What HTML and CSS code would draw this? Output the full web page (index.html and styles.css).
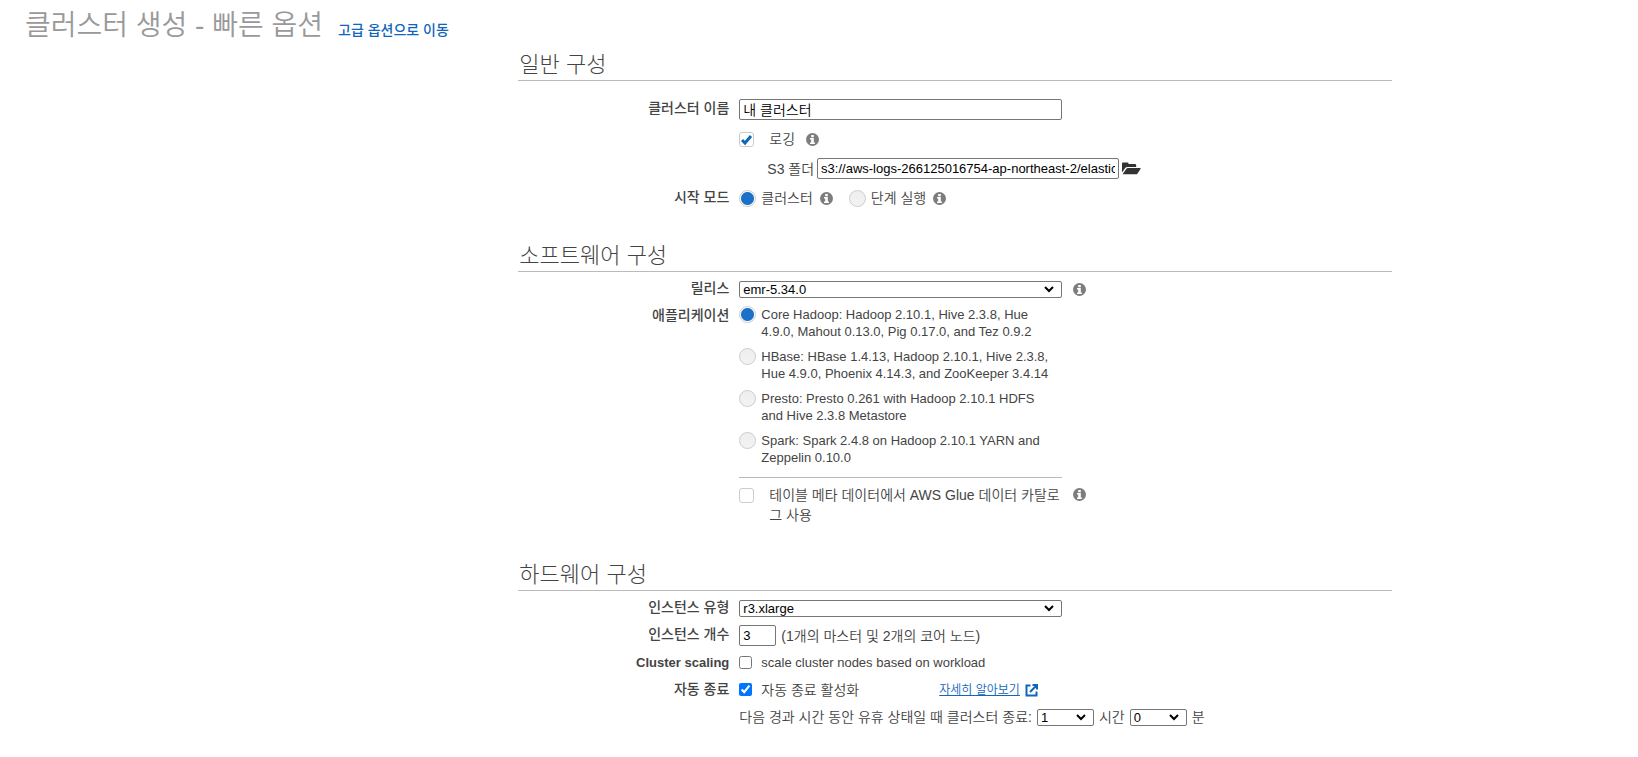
FILE: index.html
```html
<!DOCTYPE html>
<html lang="ko">

<head>
    <meta charset="utf-8">
    <title>클러스터 생성 - 빠른 옵션</title>
    <link rel="stylesheet" href="styles.css">
</head>

<body>
    <!-- shared icons -->
    <svg class="sprite" aria-hidden="true">
        <symbol id="info" viewBox="0 0 13 13">
            <circle cx="6.5" cy="6.5" r="6.5" fill="#7d7d7d" />
            <path d="M5.2 1.900h2.600v2.300H5.200zM4 5.100h3.800v4.300h1.100v1.600H4V9.400h1.200V6.600H4z" fill="#fff" />
        </symbol>
    </svg>

    <div class="header">
        <h1 class="title">클러스터 생성 - 빠른 옵션</h1>
        <a class="advanced_link" href="#">고급 옵션으로 이동</a>
    </div>

    <form class="content">
        <section class="general">
            <h2 class="heading">일반 구성</h2>
            <div class="row">
                <label class="name" for="cluster_name">클러스터 이름</label>
                <div class="field"><input class="text wide" id="cluster_name" type="text" value="내 클러스터"></div>
            </div>
            <div class="row">
                <div class="field right_col">
                    <input class="check" id="logging" type="checkbox" checked>
                    <label class="check_label" for="logging">로깅</label>
                    <svg class="info after_check"><use href="#info" /></svg>
                </div>
            </div>
            <div class="row">
                <div class="field right_col s3">
                    <label for="s3_folder">S3 폴더</label>
                    <input class="text s3_input" id="s3_folder" type="text" value="s3://aws-logs-266125016754-ap-northeast-2/elasticmapreduce/">
                    <button class="folder_btn" type="button" aria-label="폴더">
                        <svg width="19" height="13" viewBox="0 0 19 13">
                            <path d="M0 10.500V1.500Q0 .5 1 .5h4.500q1 0 1 1V2H13q1.200 0 1.200 1.200V5H5.500Q4 5 3.200 6z" fill="#333" />
                            <path d="M.8 12 4.200 7q.6-.9 1.800-.9h12.200q.9 0 .3.900l-3 4.400q-.6.9-1.700.9H1.200q-.7 0-.4-.3z" fill="#333" />
                        </svg>
                    </button>
                </div>
            </div>
            <div class="row">
                <span class="name">시작 모드</span>
                <div class="field">
                    <input class="radio" id="mode_cluster" type="radio" name="mode" checked>
                    <label class="radio_label" for="mode_cluster">클러스터</label>
                    <svg class="info after_radio"><use href="#info" /></svg>
                    <input class="radio second_radio" id="mode_step" type="radio" name="mode">
                    <label class="radio_label" for="mode_step">단계 실행</label>
                    <svg class="info after_radio"><use href="#info" /></svg>
                </div>
            </div>
        </section>

        <section class="software">
            <h2 class="heading">소프트웨어 구성</h2>
            <div class="row">
                <label class="name" for="release">릴리스</label>
                <div class="field">
                    <select class="select wide" id="release"><option>emr-5.34.0</option></select>
                    <svg class="info outside"><use href="#info" /></svg>
                </div>
            </div>
            <div class="row">
                <span class="name">애플리케이션</span>
                <div class="apps wide">
                    <div class="app">
                        <input class="radio" id="core_hadoop" type="radio" name="app" checked>
                        <label for="core_hadoop">Core Hadoop: Hadoop 2.10.1, Hive 2.3.8, Hue 4.9.0, Mahout 0.13.0, Pig 0.17.0, and Tez 0.9.2</label>
                    </div>
                    <div class="app">
                        <input class="radio" id="hbase" type="radio" name="app">
                        <label for="hbase">HBase: HBase 1.4.13, Hadoop 2.10.1, Hive 2.3.8, Hue 4.9.0, Phoenix 4.14.3, and ZooKeeper 3.4.14</label>
                    </div>
                    <div class="app">
                        <input class="radio" id="presto" type="radio" name="app">
                        <label for="presto">Presto: Presto 0.261 with Hadoop 2.10.1 HDFS and Hive 2.3.8 Metastore</label>
                    </div>
                    <div class="app">
                        <input class="radio" id="spark" type="radio" name="app">
                        <label for="spark">Spark: Spark 2.4.8 on Hadoop 2.10.1 YARN and Zeppelin 0.10.0</label>
                    </div>
                </div>
            </div>
            <div class="row">
                <div class="field right_col glue">
                    <div class="glue_box wide">
                        <input class="check" id="glue" type="checkbox">
                        <label class="check_label" for="glue">테이블 메타 데이터에서 AWS Glue 데이터 카탈로그 사용</label>
                    </div>
                    <svg class="info outside"><use href="#info" /></svg>
                </div>
            </div>
        </section>

        <section class="hardware">
            <h2 class="heading">하드웨어 구성</h2>
            <div class="row">
                <label class="name" for="instance_type">인스턴스 유형</label>
                <div class="field"><select class="select wide" id="instance_type"><option>r3.xlarge</option></select></div>
            </div>
            <div class="row">
                <label class="name" for="instance_count">인스턴스 개수</label>
                <div class="field">
                    <input class="text count" id="instance_count" type="text" value="3">
                    <span>(1개의 마스터 및 2개의 코어 노드)</span>
                </div>
            </div>
            <div class="row">
                <span class="name latin">Cluster scaling</span>
                <div class="field latin">
                    <input class="native_check" id="scaling" type="checkbox">
                    <label for="scaling">scale cluster nodes based on workload</label>
                </div>
            </div>
            <div class="row">
                <span class="name">자동 종료</span>
                <div class="field">
                    <input class="native_check" id="auto_stop" type="checkbox" checked>
                    <label for="auto_stop">자동 종료 활성화</label>
                    <a class="more_link" href="#"><span>자세히 알아보기</span>
                        <svg width="13" height="13" viewBox="0 0 13 13" fill="none" stroke="#1166bb" stroke-width="2">
                            <path d="M5.500 1.500H1.500v10h10V7.500M7.500 1H12v4.500M12 1 5 8" />
                        </svg>
                    </a>
                </div>
            </div>
            <div class="row">
                <div class="field right_col idle">
                    <label for="hours">다음 경과 시간 동안 유휴 상태일 때 클러스터 종료:</label>
                    <select class="select short" id="hours"><option>1</option></select>
                    <label for="minutes">시간</label>
                    <select class="select short" id="minutes"><option>0</option></select>
                    <span>분</span>
                </div>
            </div>
        </section>
    </form>
</body>

</html>
```
FILE: styles.css
```css
* {
    box-sizing: border-box;
}

body {
    margin: 0;
    background-color: #fff;
    color: #444;
    font-family: "Liberation Sans", "Noto Sans CJK KR", sans-serif;
    font-size: 14px;
    font-weight: 350;
    line-height: 20px;
}

.sprite {
    position: absolute;
    width: 0;
    height: 0;
}

.header {
    display: flex;
    align-items: baseline;
    gap: 15px;
    height: 47px;
    padding: 8px 25px 0;
}

.title {
    margin: 0;
    color: #999;
    font-size: 28px;
    font-weight: 350;
    line-height: 36px;
}

.advanced_link {
    color: #1166bb;
    font-weight: 500;
    text-decoration: none;
}

.content {
    width: 874px;
    max-width: 66%;
    margin: 0 15% 0 auto;
}

.heading {
    margin: 0;
    padding: 3px 1px 0;
    border-bottom: 1px solid #bbb;
    font-size: 22px;
    font-weight: 300;
    line-height: 30px;
}

.row {
    display: grid;
    grid-template-columns: 211px 1fr;
    column-gap: 10px;
}

.name {
    text-align: right;
    font-weight: 500;
    line-height: 18px;
}

.field {
    display: flex;
    align-items: center;
    min-height: 20px;
}

.right_col {
    grid-column: 2;
}

.general,
.software,
.hardware {
    display: flex;
    flex-direction: column;
}

.general {
    gap: 9px;
}

.general .heading {
    margin-bottom: 9px;
}

.software {
    gap: 7px;
    margin-top: 30px;
}

.software .heading,
.hardware .heading {
    margin-bottom: 0;
}

.hardware {
    gap: 7px;
    margin-top: 32px;
}

.wide {
    width: 323px;
}

.text,
.select {
    margin: 0;
    border: 1px solid #767676;
    border-radius: 2px;
    background-color: #fff;
    color: #000;
    font-family: inherit;
    font-size: 13px;
    font-weight: inherit;
}

.text {
    height: 21px;
    padding: 0 3px 1px;
}

/* drop-down with a bold chevron */
.select {
    appearance: none;
    height: 17px;
    padding: 0 3px;
    background: #fff url("data:image/svg+xml,%3Csvg xmlns='http://www.w3.org/2000/svg' width='10' height='7' viewBox='0 0 10 7'%3E%3Cpath d='M1 1l4 4 4-4' fill='none' stroke='%23000' stroke-width='2'/%3E%3C/svg%3E") right 7px center no-repeat;
    line-height: 15px;
}

#cluster_name {
    font-size: 14px;
}

.s3 {
    gap: 3px;
    padding-left: 28px;
}

.s3_input {
    width: 302px;
}

.folder_btn {
    display: flex;
    padding: 0;
    border: 0;
    background: none;
}

.check,
.radio {
    appearance: none;
    flex: none;
    margin: 0;
    border: 1px solid #ccc;
}

.check {
    width: 15px;
    height: 15px;
    border-radius: 3px;
    background-color: #fff;
}

.check:checked {
    background: url("data:image/svg+xml,%3Csvg xmlns='http://www.w3.org/2000/svg' viewBox='0 0 13 13'%3E%3Cpath d='M2 7l3 3 6-7' fill='none' stroke='%231166bb' stroke-width='3'/%3E%3C/svg%3E") center no-repeat;
}

.check_label {
    margin-left: 15px;
}

.radio {
    width: 17px;
    height: 17px;
    border-radius: 50%;
    background: linear-gradient(#eee, #f3f3f3);
}

.radio:checked {
    background: radial-gradient(circle, #1b70c8 0, #1b70c8 6px, #fff 7px);
}

.radio_label {
    margin-left: 5px;
}

.second_radio {
    margin-left: 16px;
}

.info {
    flex: none;
    width: 13px;
    height: 13px;
}

.after_check {
    margin-left: 11px;
}

.after_radio {
    margin-left: 7px;
}

.outside {
    margin-left: 11px;
}

.apps {
    display: flex;
    flex-direction: column;
    gap: 8px;
    padding-bottom: 11px;
    border-bottom: 1px solid #bbb;
    font-size: 13px;
    line-height: 17px;
}

.app {
    display: flex;
    align-items: flex-start;
    gap: 5px;
    padding-right: 6px;
}

.glue,
.glue_box {
    display: flex;
    align-items: flex-start;
}

.glue .check,
.glue .info {
    margin-top: 3px;
}

.glue .check_label {
    word-break: break-all;
}

.count {
    width: 37px;
    margin-right: 5px;
}

.latin {
    font-size: 13px;
    line-height: 20px;
}

.name.latin {
    font-weight: 700;
    line-height: 20px;
}

.native_check {
    width: 13px;
    height: 13px;
    margin: 0 9px 2px 0;
}

.more_link {
    display: flex;
    align-items: center;
    gap: 5px;
    margin-left: 80px;
    color: #1166bb;
    font-size: 12px;
}

.idle {
    gap: 5px;
}

.short {
    width: 57px;
}
```
